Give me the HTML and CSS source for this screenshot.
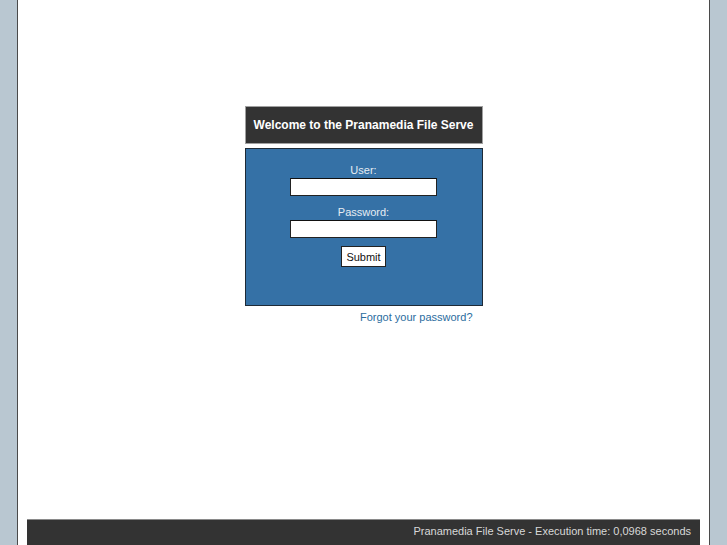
FILE: index.html
```html
<!DOCTYPE html>
<html>
<head>
<meta charset="utf-8">
<title>Pranamedia File Serve</title>
<link rel="stylesheet" href="styles.css">
</head>
<body>
<div class="page">
  <div class="login">
    <div class="login-title">Welcome to the Pranamedia File Serve</div>
    <form class="login-box">
      <label class="field-label" for="user">User:</label>
      <input class="field" id="user" type="text">
      <label class="field-label" for="pass">Password:</label>
      <input class="field" id="pass" type="password">
      <button class="submit" type="button">Submit</button>
    </form>
    <div class="forgot"><a href="#">Forgot your password?</a></div>
  </div>
  <div class="footer">Pranamedia File Serve - Execution time: 0,0968 seconds</div>
</div>
</body>
</html>
```

FILE: styles.css
```css
html, body {
  margin: 0;
  padding: 0;
  height: 100%;
}
body {
  background: #b9c7d1;
  font-family: "Liberation Sans", Arial, sans-serif;
  font-size: 11px;
}
.page {
  margin: 0 17px;
  min-height: 100%;
  box-sizing: border-box;
  background: #fff;
  border-left: 1px solid #4a4a4a;
  border-right: 1px solid #4a4a4a;
  display: flex;
  flex-direction: column;
  align-items: center;
}
.login {
  margin-top: 106px;
  width: 238px;
}
.login-title {
  box-sizing: border-box;
  height: 38px;
  background: #333;
  border: 1px solid #a0a0a0;
  color: #fff;
  font-weight: bold;
  font-size: 12px;
  display: flex;
  align-items: center;
  justify-content: center;
  white-space: nowrap;
  overflow: hidden;
}
.login-box {
  box-sizing: border-box;
  margin: 4px 0 0;
  height: 158px;
  background: #3571a6;
  border: 1px solid #1e2a36;
  display: flex;
  flex-direction: column;
  align-items: center;
  padding-top: 15px;
}
.field-label {
  color: #e6edf3;
  font-size: 11px;
  line-height: 13px;
  margin-bottom: 1px;
}
.field {
  box-sizing: border-box;
  width: 147px;
  height: 18px;
  border: 1px solid #222;
  border-top-color: #111;
  background: #fff;
  padding: 0 2px;
  margin: 0 0 10px;
  outline: none;
}
.submit {
  box-sizing: border-box;
  width: 45px;
  height: 21px;
  background: #fff;
  border: 1px solid #222;
  font-family: "Liberation Sans", Arial, sans-serif;
  font-size: 11px;
  color: #111;
  padding: 0;
  margin-top: -2px;
}
.forgot {
  text-align: right;
  padding-right: 10px;
  margin-top: 5px;
}
.forgot a {
  color: #2a6c9e;
  text-decoration: none;
  font-size: 11px;
}
.footer {
  margin-top: auto;
  align-self: stretch;
  margin-left: 9px;
  margin-right: 9px;
  box-sizing: border-box;
  height: 26px;
  background: #333;
  border-top: 1px solid #8a8a8a;
  color: #d8d8d8;
  font-size: 11px;
  text-align: right;
  padding: 5px 9px 0 0;
}
```
